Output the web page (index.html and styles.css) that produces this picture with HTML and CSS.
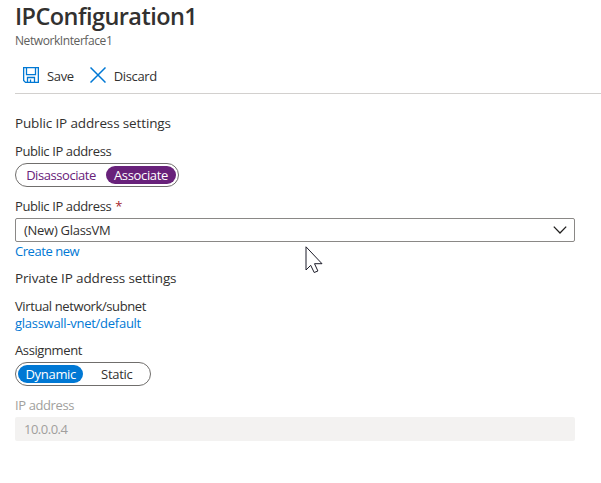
FILE: index.html
```html
<!DOCTYPE html>
<html lang="en">
<head>
<meta charset="utf-8">
<title>IPConfiguration1</title>
<link rel="stylesheet" href="styles.css">
</head>
<body>
<main class="blade">
  <h1 class="title">IPConfiguration1</h1>
  <p class="subtitle">NetworkInterface1</p>
  <div class="toolbar">
    <button class="command save"><svg width="16" height="16" viewBox="0 0 16 16" fill="none" stroke="#0078d4" stroke-width="1.300"><path d="M.65.65h14.700v14.700H2.500L.65 13.500zM3.500.65v7h9v-7M4.500 15.350v-4.850h7v4.850M7.500 12.500v3"/></svg><span>Save</span></button>
    <button class="command discard"><svg width="16" height="16" viewBox="0 0 16 16" fill="none" stroke="#0078d4" stroke-width="1.500"><path d="M.5.5l15 15M15.500.5l-15 15"/></svg><span>Discard</span></button>
  </div>
  <h2 class="section public-heading">Public IP address settings</h2>
  <div class="label toggle-label">Public IP address</div>
  <div class="toggle public-toggle"><span class="option disassociate">Disassociate</span><span class="option associate selected">Associate</span></div>
  <div class="label select-label">Public IP address <span class="required">*</span></div>
  <div class="select"><span>(New) GlassVM</span><svg width="14" height="8" viewBox="0 0 14 8" fill="none" stroke="#201f1e" stroke-width="1.300"><path d="M.8.6L7 7 13.200.6"/></svg></div>
  <a class="link create">Create new</a>
  <h2 class="section private-heading">Private IP address settings</h2>
  <div class="label network-label">Virtual network/subnet</div>
  <a class="link network">glasswall-vnet/default</a>
  <div class="label assignment-label">Assignment</div>
  <div class="toggle assignment"><span class="option dynamic selected">Dynamic</span><span class="option static">Static</span></div>
  <div class="label ip-label">IP address</div>
  <div class="ip-field">10.0.0.4</div>
</main>
<svg class="cursor" width="19" height="28" viewBox="0 0 19 28"><path d="M1 .8v23.200l4.700-4.700 3.500 7.200 3.700-1.500-3.400-7.300h7.500z" fill="#fff" stroke="#1b1b28"/></svg>
</body>
</html>
```
FILE: styles.css
```css
* { box-sizing: border-box; }
body { margin: 0; background: #fff; color: #323130; font: 13px/18px "Open Sans", "Noto Sans", sans-serif; letter-spacing: -.39px; }
.blade { width: 601px; padding: 2px 0 0 15px; }
h1, h2, p { margin: 0; font-weight: 400; }
.title { height: 30px; font-size: 23.500px; line-height: 28px; font-weight: 600; letter-spacing: -.56px; }
.subtitle { height: 18px; font-size: 12px; color: #605e5c; letter-spacing: -.42px; }
.toolbar { display: flex; height: 44px; padding: 9px 0 0 8px; border-bottom: 1px solid #d2d0ce; gap: 16px; }
.command { display: flex; align-items: center; height: 34px; padding: 0; border: 0; background: none; color: inherit; font: inherit; letter-spacing: -.35px; gap: 8px; }
.command svg { position: relative; top: -1px; }
.section { height: 18px; font-size: 13.500px; letter-spacing: -.14px; }
.public-heading { margin-top: 20px; }
.label { height: 18px; white-space: nowrap; }
.toggle-label { margin-top: 10px; }
.toggle { display: flex; border: 1px solid #706e6c; border-radius: 12px; height: 24px; padding: 2px; }
.option { display: flex; align-items: center; justify-content: center; height: 18px; border-radius: 9px; }
.public-toggle { width: 164px; margin-top: 3px; color: #68217a; }
.disassociate { width: 88px; letter-spacing: -.44px; padding-right: 2px; }
.associate { width: 70px; letter-spacing: -.34px; }
.public-toggle .selected { background: #68217a; color: #fff; }
.select-label { margin-top: 10px; }
.required { color: #a4262c; margin-left: 1px; }
.select { display: flex; align-items: center; justify-content: space-between; width: 560px; height: 24px; margin-top: 3px; border: 1px solid #8a8886; padding: 0 7px 0 8px; border-radius: 2px; letter-spacing: -.28px; }
.link { display: block; height: 18px; color: #0078d4; }
.create { letter-spacing: -.45px; }
.private-heading { margin-top: 9px; }
.network-label { margin-top: 10px; }
.network { height: 17px; line-height: 17px; letter-spacing: -.27px; }
.assignment-label { margin-top: 9px; }
.assignment { width: 136px; height: 24px; margin-top: 3px; }
.dynamic { width: 66px; }
.static { width: 65px; letter-spacing: -.3px; padding-left: 2px; }
.assignment .dynamic { letter-spacing: -.3px; }
.assignment .selected { color: #fff; background: #0078d4; }
.ip-label { margin-top: 10px; color: #a19f9d; }
.ip-field { width: 560px; height: 24px; margin-top: 3px; padding: 3px 9px; color: #a19f9d; background: #f3f2f1; letter-spacing: -.5px; border-radius: 2px; }
.cursor { position: absolute; left: 305px; top: 246px; }
```
